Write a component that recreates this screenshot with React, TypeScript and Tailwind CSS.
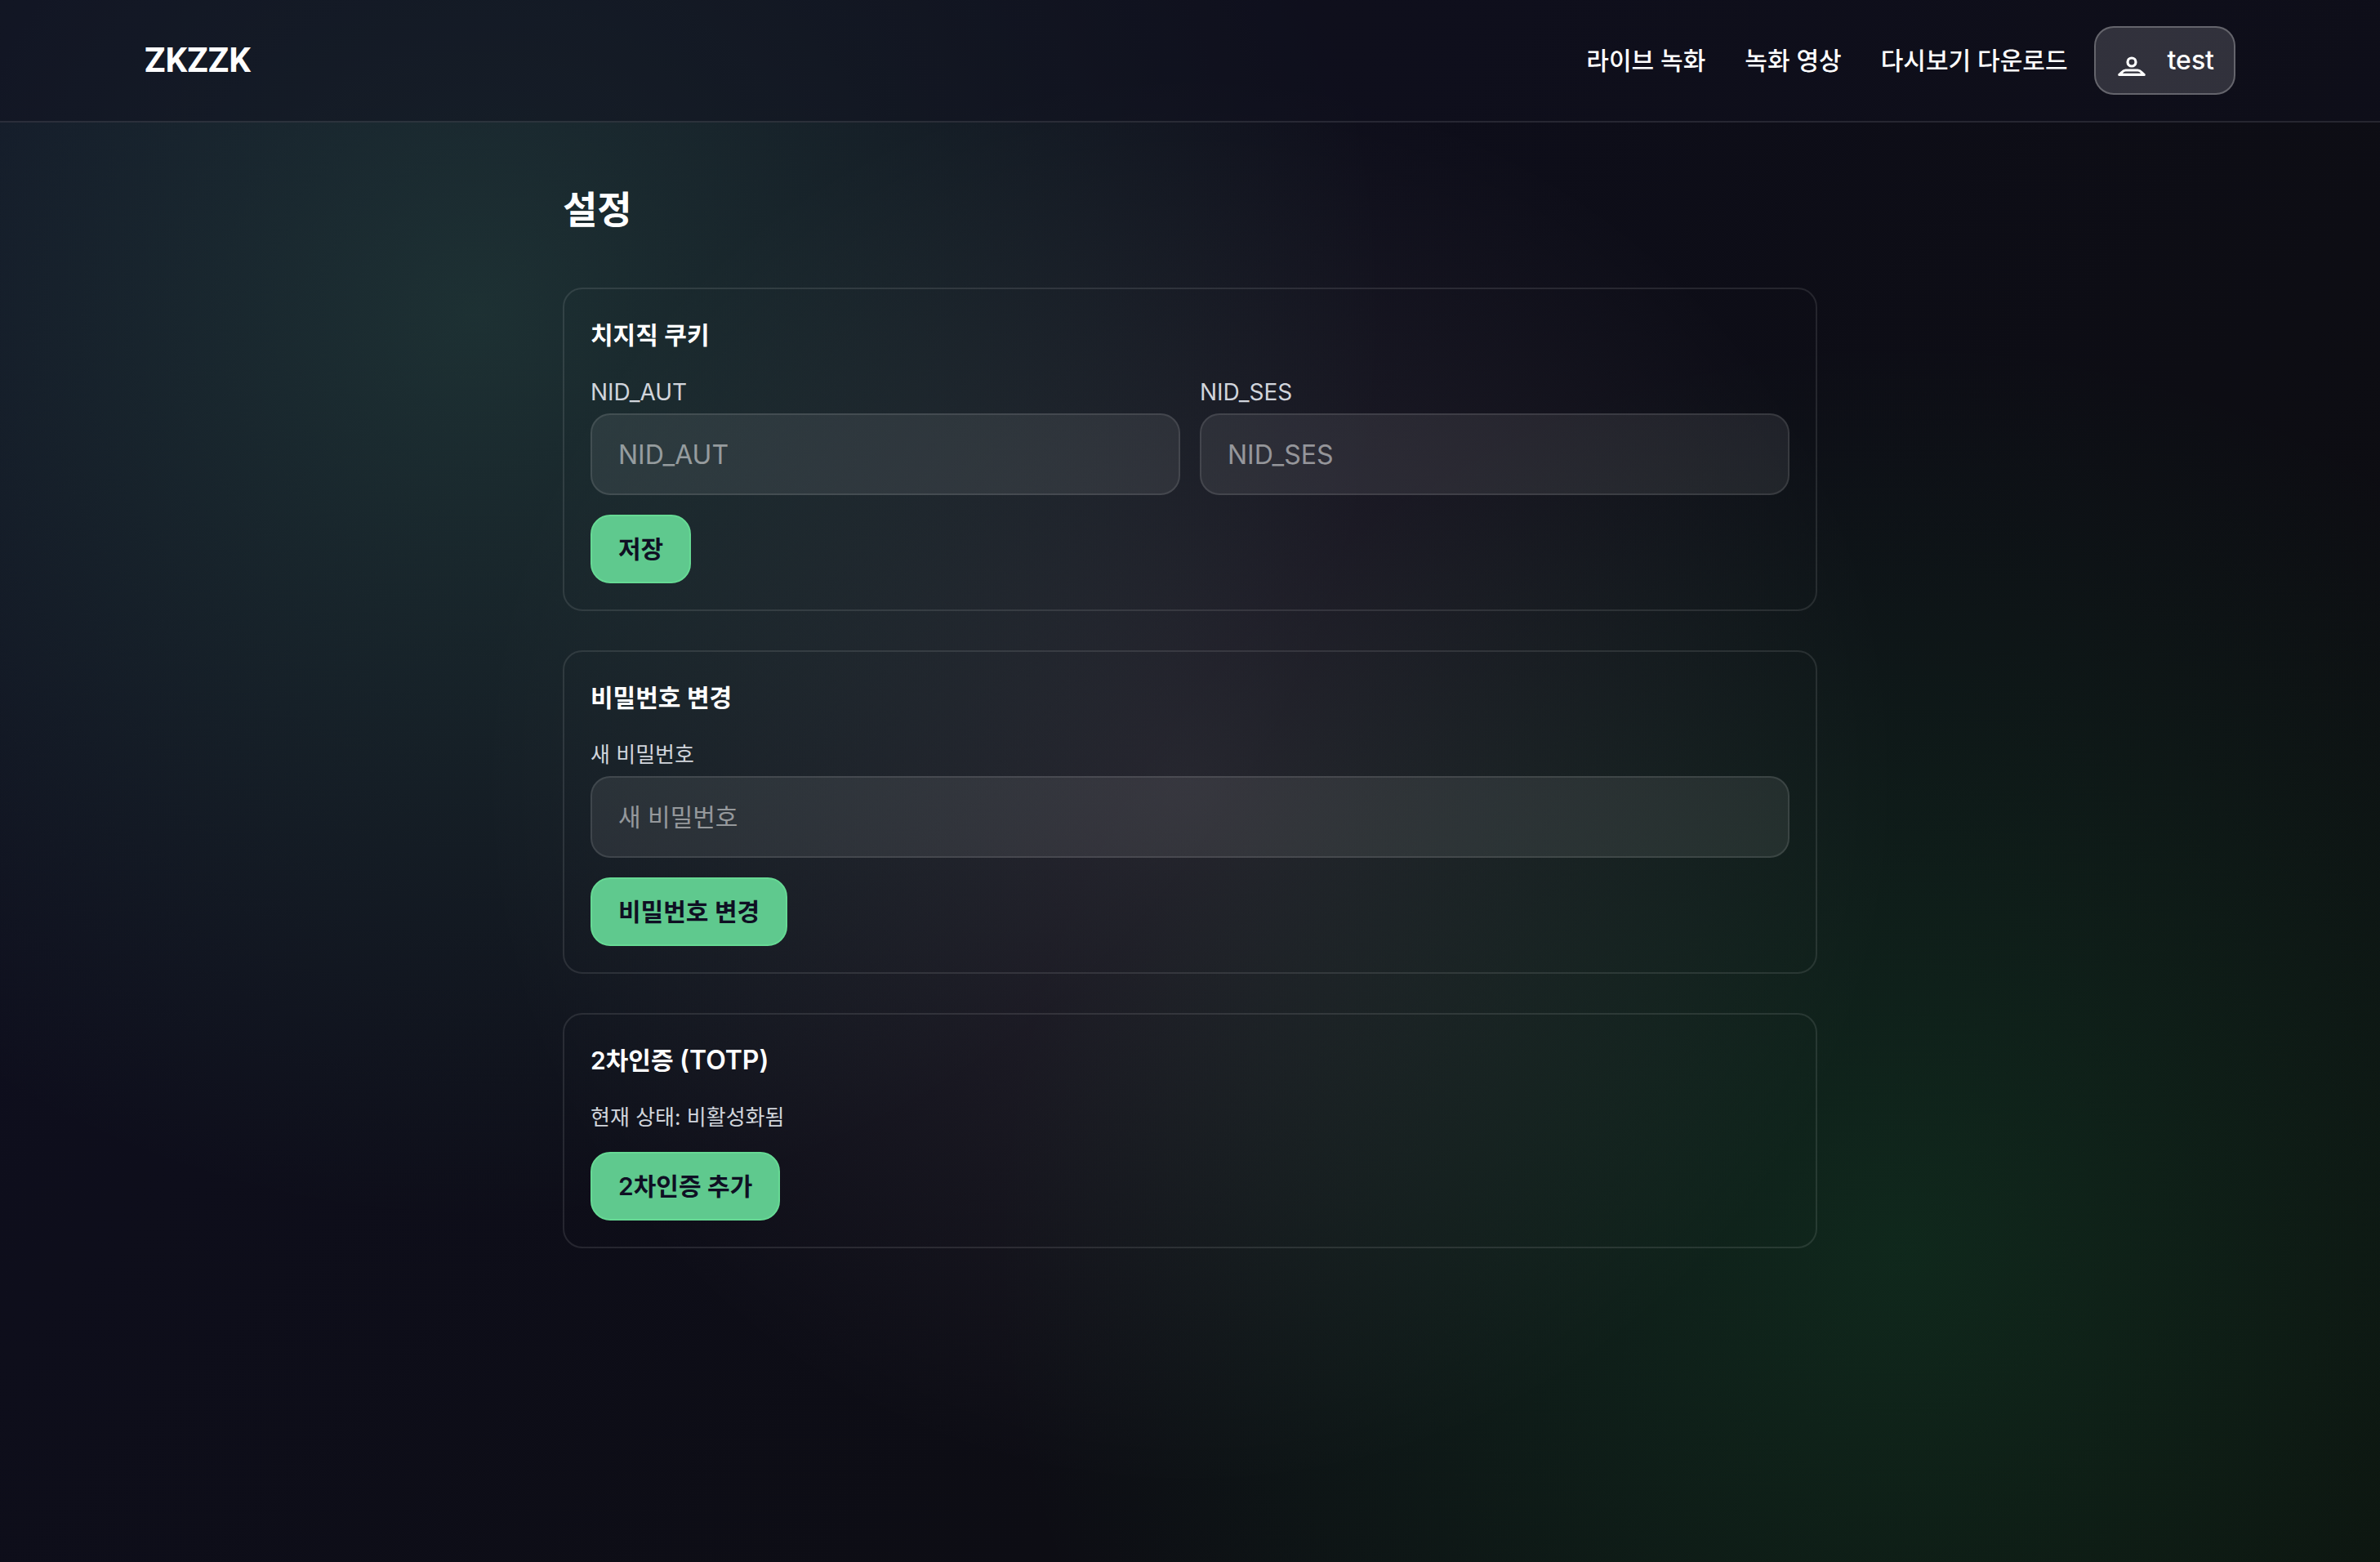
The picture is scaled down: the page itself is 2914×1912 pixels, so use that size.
import type { ReactNode } from "react";

const navLinks = ["라이브 녹화", "녹화 영상", "다시보기 다운로드"];

function UserIcon() {
  return (
    <svg viewBox="0 0 40 40" className="h-10 w-10" fill="none" stroke="currentColor" strokeWidth="3.2" strokeLinejoin="round" aria-hidden="true">
      <circle cx="20" cy="22" r="5" />
      <path d="M4.8 37.4 C7.5 36 8.5 32 12.5 32 H27.5 C31.5 32 32.5 36 35.2 37.4 Z" />
    </svg>
  );
}

function Card({ title, children }: { title: ReactNode; children: ReactNode }) {
  return (
    <section className="rounded-3xl border-2 border-white/10 p-8">
      <h2 className="mb-6 text-[30px] leading-[48px] font-semibold text-white">{title}</h2>
      {children}
    </section>
  );
}

function Field({ id, label, type = "text", size }: { id: string; label: string; type?: string; size: "latin" | "hangul" }) {
  return (
    <div>
      <label
        htmlFor={id}
        className={`mb-1 block leading-[44px] text-gray-300 ${size === "latin" ? "text-[28px]" : "text-[26px]"}`}
      >
        {label}
      </label>
      <input
        id={id}
        type={type}
        placeholder={label}
        className={`block h-[100px] w-full rounded-3xl border-2 border-white/10 bg-white/8 px-8 text-white outline-none placeholder:text-white/50 ${size === "latin" ? "text-[32px]" : "text-[30px]"}`}
      />
    </div>
  );
}

function PrimaryButton({ children }: { children: ReactNode }) {
  return (
    <button
      type="button"
      className="block rounded-3xl border-2 border-[#66d994] bg-[#5fc98e] px-8 py-4 text-[30px] leading-[48px] font-semibold text-[#0f0f23]"
    >
      {children}
    </button>
  );
}

export default function App() {
  return (
    <div className="min-h-screen bg-[radial-gradient(circle_at_20%_20%,rgba(102,217,153,0.17)_0%,transparent_40%),radial-gradient(circle_at_80%_80%,rgba(34,197,94,0.15)_0%,transparent_40%),radial-gradient(circle_at_50%_50%,rgba(245,225,235,0.1)_0%,transparent_50%),linear-gradient(135deg,#0f0f23_0%,#0c0c0c_100%)] font-['Inter','Noto_Sans_CJK_KR',sans-serif] text-white">
      <header className="border-b-2 border-white/10 bg-[#0f0f1e]/50 px-16">
        <div className="mx-auto flex h-[148px] max-w-[2560px] items-center justify-between">
          <a href="#" className="font-['Roboto',sans-serif] text-[42px] leading-[56px] font-bold">
            ZKZZK
          </a>
          <div className="flex items-center gap-8">
            <nav className="flex gap-12">
              {navLinks.map((label) => (
                <a key={label} href="#" className="text-[30px] leading-[48px] font-medium">
                  {label}
                </a>
              ))}
            </nav>
            <button
              type="button"
              className="flex items-center gap-6 rounded-3xl border-2 border-white/25 bg-white/15 px-6 py-4 text-[32px] leading-[48px] font-medium"
            >
              <UserIcon />
              test
            </button>
          </div>
        </div>
      </header>

      <main className="mx-auto max-w-[1536px] pt-[70px] pb-16">
        <h1 className="mb-[60px] text-[46px] leading-[72px] font-bold">설정</h1>
        <div className="flex flex-col gap-12">
          <Card title="치지직 쿠키">
            <form className="flex flex-col items-start gap-6">
              <div className="grid w-full grid-cols-2 gap-6">
                <Field id="nid-aut" label="NID_AUT" size="latin" />
                <Field id="nid-ses" label="NID_SES" size="latin" />
              </div>
              <PrimaryButton>저장</PrimaryButton>
            </form>
          </Card>
          <Card title="비밀번호 변경">
            <form className="flex flex-col items-start gap-6">
              <div className="w-full">
                <Field id="new-password" label="새 비밀번호" type="password" size="hangul" />
              </div>
              <PrimaryButton>비밀번호 변경</PrimaryButton>
            </form>
          </Card>
          <Card
            title={
              <>
                2차인증 <span className="text-[32px]">(TOTP)</span>
              </>
            }
          >
            <div className="flex flex-col items-start gap-5">
              <p className="text-[26px] leading-[44px] text-gray-300">현재 상태: 비활성화됨</p>
              <PrimaryButton>2차인증 추가</PrimaryButton>
            </div>
          </Card>
        </div>
      </main>
    </div>
  );
}
